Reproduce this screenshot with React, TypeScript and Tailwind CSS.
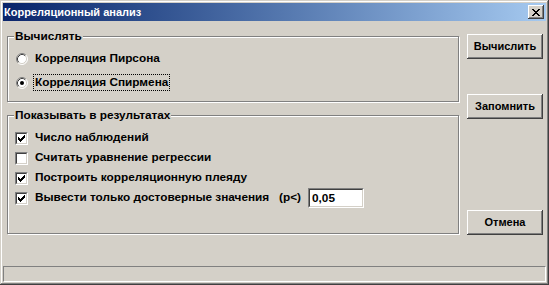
import React from 'react';

const font = { fontFamily: '"Liberation Sans", Arial, sans-serif' };

const Radio = ({ checked }: { checked?: boolean }) => (
  <svg width="12" height="12" viewBox="0 0 12 12" className="shrink-0">
    <circle cx="6" cy="6" r="5" fill="#fff" />
    <path d="M2.11 9.89 A5.5 5.5 0 0 1 9.89 2.11" fill="none" stroke="#808080" />
    <path d="M9.89 2.11 A5.5 5.5 0 0 1 2.11 9.89" fill="none" stroke="#fff" />
    <path d="M2.82 9.18 A4.5 4.5 0 0 1 9.18 2.82" fill="none" stroke="#404040" />
    <path d="M9.18 2.82 A4.5 4.5 0 0 1 2.82 9.18" fill="none" stroke="#d4d0c8" />
    {checked && <circle cx="6" cy="6" r="2" fill="#000" />}
  </svg>
);

const Check = ({ checked }: { checked?: boolean }) => (
  <div className="w-[13px] h-[13px] shrink-0 bg-white border-t border-l border-t-[#808080] border-l-[#808080] border-b border-r border-b-white border-r-white">
    <div className="w-full h-full border-t border-l border-t-[#404040] border-l-[#404040] border-b border-r border-b-[#d4d0c8] border-r-[#d4d0c8]">
      {checked && (
        <svg width="9" height="9" viewBox="0 0 9 9" className="block">
          <path d="M1.5 3.5 L3.5 5.5 L7.5 1.5 M1.5 4.5 L3.5 6.5 L7.5 2.5 M1.5 5.5 L3.5 7.5 L7.5 3.5" fill="none" stroke="#000" strokeWidth="1" shapeRendering="crispEdges" />
        </svg>
      )}
    </div>
  </div>
);

const Button = ({ label, className }: { label: string; className?: string }) => (
  <button className={`w-[76px] h-[25px] bg-[#d4d0c8] text-[11px] font-bold text-black shadow-[inset_-1px_-1px_0_#404040,inset_1px_1px_0_#fff,inset_-2px_-2px_0_#808080] ${className ?? ''}`}>
    {label}
  </button>
);

const Group = ({ title, className, children }: { title: string; className?: string; children: React.ReactNode }) => (
  <div className={`relative border border-[#808080] shadow-[inset_1px_1px_0_#fff,1px_1px_0_#fff] ${className ?? ''}`}>
    <span className="absolute -top-[8px] left-[6px] px-[1px] bg-[#d4d0c8] leading-[14px]">{title}</span>
    {children}
  </div>
);

export default function App() {
  return (
    <div
      style={font}
      className="w-[549px] h-[285px] p-[3px] flex flex-col bg-[#d4d0c8] text-[11.8px] font-bold text-black shadow-[inset_-1px_-1px_0_#404040,inset_1px_1px_0_#d4d0c8,inset_-2px_-2px_0_#808080,inset_2px_2px_0_#fff]"
    >
      {/* Title bar */}
      <div className="h-[18px] shrink-0 flex items-center justify-between pl-[1px] pr-[2px] bg-gradient-to-r from-[#0a246a] to-[#a6caf0]">
        <span className="text-white text-[11px] leading-[18px]">Корреляционный анализ</span>
        <div className="w-[16px] h-[14px] flex items-center justify-center bg-[#d4d0c8] shadow-[inset_-1px_-1px_0_#404040,inset_1px_1px_0_#fff,inset_-2px_-2px_0_#808080]">
          <svg width="8" height="7" viewBox="0 0 8 7" shapeRendering="crispEdges">
            <path d="M0 0h2v1h-2zM6 0h2v1h-2zM1 1h2v1h-2zM5 1h2v1h-2zM2 2h4v1h-4zM3 3h2v1h-2zM2 4h4v1h-4zM1 5h2v1h-2zM5 5h2v1h-2zM0 6h2v1h-2zM6 6h2v1h-2z" fill="#000" />
          </svg>
        </div>
      </div>

      {/* Body */}
      <div className="flex-1 flex">
        <div className="pl-[4px] pt-[15px] w-[456px] flex flex-col">
          <Group title="Вычислять" className="h-[66px] pt-[13px] pl-[8px]">
            <div className="flex items-center h-[17px]">
              <Radio />
              <span className="ml-[5px] px-[1px] border border-transparent leading-[15px]">Корреляция Пирсона</span>
            </div>
            <div className="flex items-center h-[17px] mt-[7px]">
              <Radio checked />
              <span className="ml-[5px] px-[1px] border border-dotted border-black leading-[15px]">Корреляция Спирмена</span>
            </div>
          </Group>

          <Group title="Показывать в результатах" className="h-[119px] mt-[13px] pt-[12px] pl-[7px]">
            <div className="flex items-center h-[20px]">
              <Check checked />
              <span className="ml-[7px]">Число наблюдений</span>
            </div>
            <div className="flex items-center h-[20px]">
              <Check />
              <span className="ml-[7px]">Считать уравнение регрессии</span>
            </div>
            <div className="flex items-center h-[20px]">
              <Check checked />
              <span className="ml-[7px]">Построить корреляционную плеяду</span>
            </div>
            <div className="flex items-center h-[20px]">
              <Check checked />
              <span className="ml-[7px] w-[244px] shrink-0">Вывести только достоверные значения</span>
              <span className="w-[29px] shrink-0">(p&lt;)</span>
              <div className="w-[56px] h-[20px] bg-white border-t border-l border-t-[#808080] border-l-[#808080] border-b border-r border-b-white border-r-white">
                <div className="w-full h-full pl-[2px] leading-[16px] border-t border-l border-t-[#404040] border-l-[#404040] border-b border-r border-b-[#d4d0c8] border-r-[#d4d0c8]">
                  0,05
                </div>
              </div>
            </div>
          </Group>
        </div>

        <div className="ml-[8px] flex flex-col">
          <Button label="Вычислить" className="mt-[13px]" />
          <Button label="Запомнить" className="mt-[35px]" />
          <Button label="Отмена" className="mt-[91px]" />
        </div>
      </div>

      {/* Status bar */}
      <div className="h-[16px] shrink-0 border-t border-l border-t-[#808080] border-l-[#808080] border-b border-r border-b-white border-r-white" />
    </div>
  );
}
